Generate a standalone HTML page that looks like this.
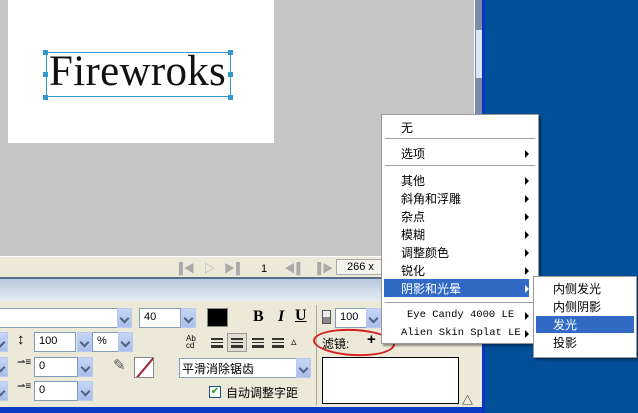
<!DOCTYPE html>
<html><head><meta charset="utf-8"><style>
*{margin:0;padding:0;box-sizing:border-box}
body{width:638px;height:413px;overflow:hidden;position:relative;background:#004f98;font-family:"Liberation Sans","Noto Sans CJK SC",sans-serif;font-size:12px;color:#000}
.a{position:absolute}
.inp{position:absolute;background:#fff;border:1px solid #7f9db9;font-size:11px;padding:2px 0 0 4px;height:20px}
.btn{position:absolute;width:15px;height:20px;background:linear-gradient(#c6d6f6,#a8bde8);border:1px solid #b9c9ef}
.btn:after{content:"";position:absolute;left:3px;top:6px;width:5px;height:5px;border-right:2px solid #4d6185;border-bottom:2px solid #4d6185;transform:rotate(45deg)}
.mi{position:absolute;left:19px;font-size:12px}
.ar{position:absolute;right:9px;width:0;height:0;border-left:4px solid #000;border-top:4px solid transparent;border-bottom:4px solid transparent}
.sep{position:absolute;left:3px;right:3px;height:2px;border-top:1px solid #a0a0a0;border-bottom:1px solid #fff}
.al{position:absolute;top:338px;width:12px;height:10px;border-top:2px solid #333;border-bottom:2px solid #333}
.al:after{content:"";position:absolute;left:0;right:0;top:2px;height:2px;border-top:1px solid #333;border-bottom:1px solid #333}
</style></head><body>
<div class="a" style="left:0;top:0;width:474px;height:256px;background:#c6c6c6"></div>
<div class="a" style="left:474px;top:0;width:1px;height:256px;background:#fff"></div>
<div class="a" style="left:475px;top:0;width:7px;height:256px;background:#7b8ba8"></div>
<div class="a" style="left:476px;top:30px;width:6px;height:48px;background:#dfe6f2"></div>
<div class="a" style="left:482px;top:0;width:3px;height:413px;background:#0834c8"></div>
<div class="a" style="left:8px;top:0;width:266px;height:143px;background:#fff"></div>
<div class="a" style="left:46px;top:52px;width:185px;height:45px;border:1px solid #3399cc"></div>
<div class="a" style="left:43px;top:50px;width:5px;height:5px;background:#39c"></div>
<div class="a" style="left:228px;top:50px;width:5px;height:5px;background:#39c"></div>
<div class="a" style="left:43px;top:95px;width:5px;height:5px;background:#39c"></div>
<div class="a" style="left:228px;top:95px;width:5px;height:5px;background:#39c"></div>
<div class="a" style="left:43px;top:72px;width:5px;height:5px;background:#39c"></div>
<div class="a" style="left:228px;top:72px;width:5px;height:5px;background:#39c"></div>
<div class="a" style="left:49px;top:47px;font-family:'Liberation Serif',serif;font-size:43px;color:#111;letter-spacing:0.3px">Firewroks</div>
<!-- status bar -->
<div class="a" style="left:0;top:256px;width:482px;height:21px;background:#ece9d8;border-top:1px solid #fff"></div>
<div class="a" style="left:175px;top:260px;color:#aaa;font-size:11px;letter-spacing:1px">▐◀&nbsp;&nbsp;▷&nbsp;&nbsp;▶▌&nbsp;&nbsp;&nbsp;&nbsp;<span style="color:#000">1</span>&nbsp;&nbsp;&nbsp;&nbsp;◀▌&nbsp;&nbsp;▐▶&nbsp;&nbsp;⊗</div>
<div class="a" style="left:336px;top:259px;width:50px;height:16px;border:1px solid #aaa;background:#f4f3ee;font-size:11px;padding:1px 0 0 10px">266 x</div>
<div class="a" style="left:0;top:277px;width:482px;height:2px;background:#56708c"></div>
<div class="a" style="left:0;top:279px;width:482px;height:22px;background:linear-gradient(#b7c8dc,#e6ecf3)"></div>
<div class="a" style="left:0;top:301px;width:482px;height:106px;background:#ece9d8"></div>
<div class="a" style="left:0;top:407px;width:482px;height:6px;background:#0b3ec6"></div>
<!-- row1 -->
<div class="inp" style="left:-2px;top:308px;width:120px"></div><div class="btn" style="left:117px;top:308px"></div>
<div class="inp" style="left:139px;top:308px;width:42px">40</div><div class="btn" style="left:181px;top:308px"></div>
<div class="a" style="left:207px;top:308px;width:21px;height:19px;background:#000;border:1px solid #888"></div>
<div class="a" style="left:253px;top:308px;font-family:'Liberation Serif',serif;font-weight:bold;font-size:16px">B</div>
<div class="a" style="left:278px;top:308px;font-family:'Liberation Serif',serif;font-style:italic;font-weight:bold;font-size:16px">I</div>
<div class="a" style="left:295px;top:307px;font-family:'Liberation Serif',serif;font-weight:bold;font-size:16px;text-decoration:underline">U</div>
<!-- row2 -->
<div class="btn" style="left:-7px;top:332px"></div>
<div class="a" style="left:17px;top:331px;font-size:15px">↕</div>
<div class="inp" style="left:34px;top:332px;width:42px">100</div><div class="btn" style="left:77px;top:332px"></div>
<div class="inp" style="left:92px;top:332px;width:28px">%</div><div class="btn" style="left:118px;top:332px"></div>
<div class="a" style="left:186px;top:335px;font-size:8px;line-height:7px">Ab<br>cd</div>
<div class="al" style="left:211px"></div>
<div class="a" style="left:227px;top:333px;width:20px;height:19px;border:1px solid #999;background:#e0ddd0"></div>
<div class="al" style="left:231px"></div>
<div class="al" style="left:252px"></div>
<div class="al" style="left:272px"></div>
<div class="a" style="left:291px;top:335px;font-size:11px">▵</div>
<!-- row3/4 -->
<div class="btn" style="left:-7px;top:357px"></div>
<div class="a" style="left:17px;top:357px;font-size:10px">⇀≡</div>
<div class="inp" style="left:34px;top:357px;width:44px">0</div><div class="btn" style="left:78px;top:357px"></div>
<div class="btn" style="left:-7px;top:381px"></div>
<div class="a" style="left:17px;top:381px;font-size:10px">⇀≡</div>
<div class="inp" style="left:34px;top:381px;width:44px">0</div><div class="btn" style="left:78px;top:381px"></div>
<div class="a" style="left:113px;top:356px;font-size:15px;color:#555">✎</div>
<div class="a" style="left:134px;top:357px;width:20px;height:21px;background:#fff;border:1px solid #888;overflow:hidden"><div style="position:absolute;left:-4px;top:9px;width:28px;height:2px;background:#a02030;transform:rotate(-50deg)"></div></div>
<div class="inp" style="left:179px;top:358px;width:118px;font-size:12px;padding:1px 0 0 2px">平滑消除锯齿</div><div class="btn" style="left:296px;top:358px"></div>
<div class="a" style="left:209px;top:386px;width:12px;height:12px;border:1px solid #1c5180;background:#fff;color:#21a121;font-size:10px;line-height:10px;text-align:center">✔</div>
<div class="a" style="left:226px;top:384px;font-size:12px">自动调整字距</div>
<div class="a" style="left:316px;top:305px;width:1px;height:100px;background:#aca899"></div>
<div class="a" style="left:322px;top:310px;width:9px;height:14px;border:1px solid #555;background:linear-gradient(#eee 50%,#888 50%)"></div>
<div class="inp" style="left:335px;top:308px;width:32px">100</div><div class="btn" style="left:366px;top:308px"></div>
<div class="a" style="left:322px;top:335px;font-size:12px">滤镜:</div>
<div class="a" style="left:367px;top:331px;font-size:15px;font-weight:bold">+</div>
<div class="a" style="left:313px;top:329px;width:82px;height:27px;border:2px solid #d42020;border-radius:50%;transform:rotate(3deg)"></div>
<div class="a" style="left:322px;top:357px;width:137px;height:47px;background:#fff;border:1px solid #000"></div>
<div class="a" style="left:462px;top:392px;font-size:11px">△</div>
<!-- menu -->
<div class="a" style="left:381px;top:114px;width:158px;height:230px;background:#fff;border:1px solid #999;box-shadow:2px 2px 2px rgba(0,0,0,.4)">
<div class="mi" style="top:4px">无</div>
<div class="sep" style="top:23px"></div>
<div class="mi" style="top:30px">选项</div><div class="ar" style="top:35px"></div>
<div class="sep" style="top:50px"></div>
<div class="mi" style="top:57px">其他</div><div class="ar" style="top:62px"></div>
<div class="mi" style="top:75px">斜角和浮雕</div><div class="ar" style="top:80px"></div>
<div class="mi" style="top:93px">杂点</div><div class="ar" style="top:98px"></div>
<div class="mi" style="top:111px">模糊</div><div class="ar" style="top:116px"></div>
<div class="mi" style="top:129px">调整颜色</div><div class="ar" style="top:134px"></div>
<div class="mi" style="top:147px">锐化</div><div class="ar" style="top:152px"></div>
<div class="a" style="left:2px;top:164px;width:145px;height:18px;background:#316ac5"></div>
<div class="mi" style="top:165px;color:#fff">阴影和光晕</div><div class="ar" style="top:170px;border-left-color:#fff"></div>
<div class="sep" style="top:187px"></div>
<div class="mi" style="top:194px;left:25px;font-family:'Liberation Mono',monospace;font-size:10.5px">Eye Candy 4000 LE</div><div class="ar" style="top:197px"></div>
<div class="mi" style="top:212px;font-family:'Liberation Mono',monospace;font-size:10.5px">Alien Skin Splat LE</div><div class="ar" style="top:215px"></div>
</div>
<div class="a" style="left:533px;top:276px;width:104px;height:82px;background:#fff;border:1px solid #999;box-shadow:2px 2px 2px rgba(0,0,0,.4)">
<div class="mi" style="top:3px">内侧发光</div>
<div class="mi" style="top:21px">内侧阴影</div>
<div class="a" style="left:2px;top:39px;width:98px;height:17px;background:#316ac5"></div>
<div class="mi" style="top:39px;color:#fff">发光</div>
<div class="mi" style="top:57px">投影</div>
</div>
</body></html>
